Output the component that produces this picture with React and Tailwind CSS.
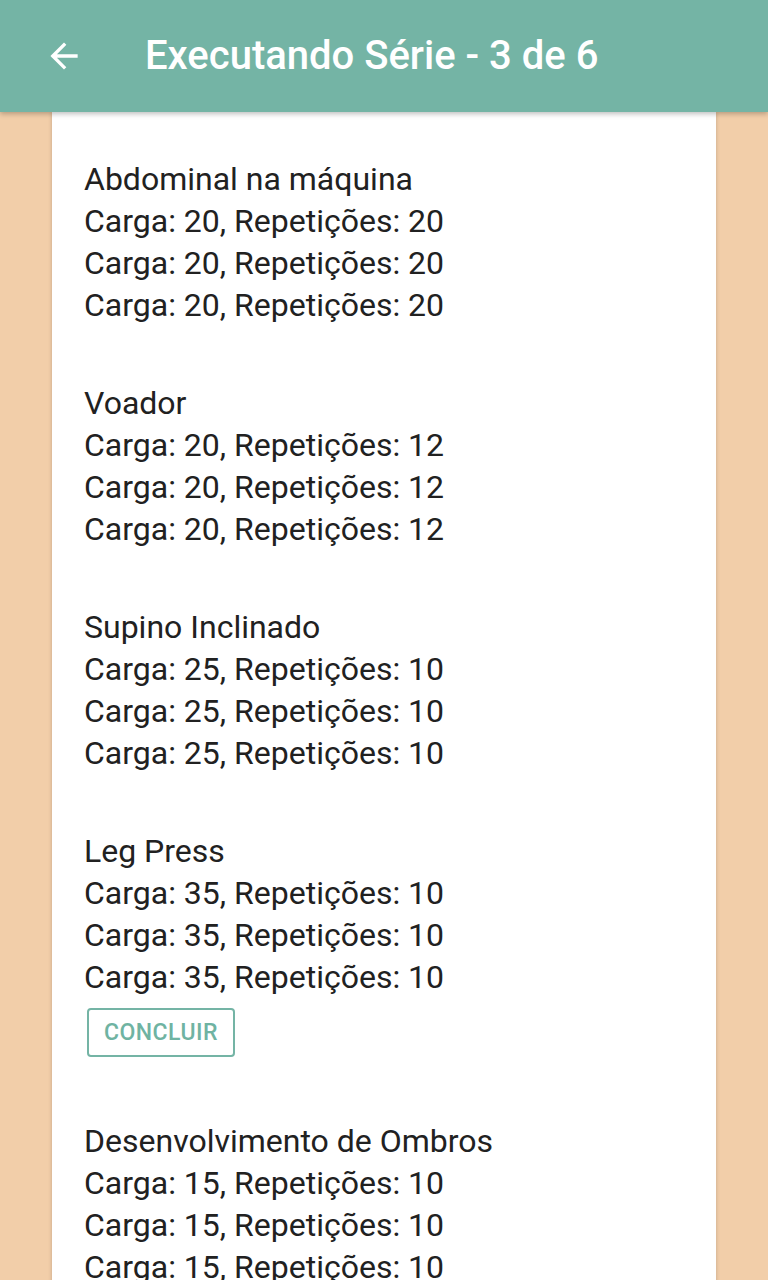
import React from 'react';

const exercicios = [
  { nome: 'Abdominal na máquina', carga: 20, reps: 20 },
  { nome: 'Voador', carga: 20, reps: 12 },
  { nome: 'Supino Inclinado', carga: 25, reps: 10 },
  { nome: 'Leg Press', carga: 35, reps: 10, atual: true },
  { nome: 'Desenvolvimento de Ombros', carga: 15, reps: 10 },
  { nome: 'Rosca Direta', carga: 10, reps: 12 },
];

function Exercicio({ ex }) {
  return (
    <div className="mb-[56px]">
      <div>{ex.nome}</div>
      {[0, 1, 2].map((i) => (
        <div key={i}>
          Carga: {ex.carga}, Repetições: {ex.reps}
        </div>
      ))}
      {ex.atual && (
        <button className="mt-[10px] mb-[7px] ml-[3px] h-[49px] w-[148px] border-2 border-[#74b4a5] rounded-[4px] text-[23px] leading-none font-medium text-[#6fb3a2] tracking-[0.5px]">
          CONCLUIR
        </button>
      )}
    </div>
  );
}

export default function App() {
  return (
    <div
      className="h-[1280px] overflow-hidden bg-[#f2cea9] flex flex-col"
      style={{ fontFamily: 'Roboto, sans-serif' }}
    >
      <header className="h-[112px] shrink-0 bg-[#74b4a5] flex items-center relative z-10 shadow-[0_2px_5px_rgba(0,0,0,0.25)]">
        <svg className="ml-[46px] w-[36px] h-[36px]" viewBox="0 0 24 24" fill="none" stroke="white" strokeWidth="2.2" strokeLinecap="square">
          <path d="M20 12H5M12 4.5L4.5 12 12 19.5" />
        </svg>
        <h1 className="ml-[63px] text-white text-[40px] font-medium leading-none">
          Executando Série - 3 de 6
        </h1>
      </header>
      <main className="mx-[52px] flex-1 bg-white shadow-[0_0_4px_rgba(0,0,0,0.2)] pt-[46px] px-[32px] text-[32px] leading-[42px] text-[#212121]">
        {exercicios.map((ex) => (
          <Exercicio key={ex.nome} ex={ex} />
        ))}
      </main>
    </div>
  );
}
